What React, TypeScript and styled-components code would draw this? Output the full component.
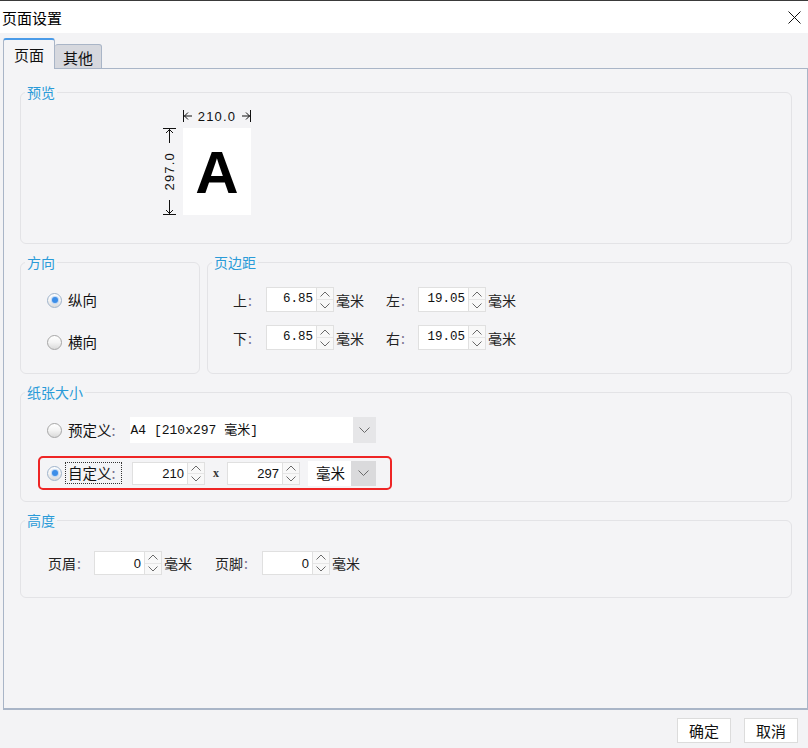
import * as React from "react";
import styled, { createGlobalStyle } from "styled-components";

const GlobalStyle = createGlobalStyle`
  html, body {
    margin: 0;
    padding: 0;
    background: #f3f3f5;
  }
  body {
    font-family: "Noto Sans CJK SC", "Liberation Sans", sans-serif;
    color: #1a1a1a;
  }
  * {
    box-sizing: border-box;
  }
`;

const Window = styled.div`
  width: 808px;
  height: 748px;
  display: flex;
  flex-direction: column;
  background: #f3f3f5;
  border-top: 1px solid #3a3a3a;
  overflow: hidden;
`;

const TitleBar = styled.div`
  height: 32px;
  flex: none;
  background: #fff;
  display: flex;
  align-items: center;
  justify-content: space-between;
  padding: 0 7px 0 2px;
  font-size: 15px;
  line-height: 1;
  color: #000;
`;

const CloseButton = styled.div`
  width: 14px;
  height: 14px;
  display: flex;
  align-items: center;
  justify-content: center;
`;

const Body = styled.div`
  flex: none;
  padding: 5px 0 0 3px;
`;

const TabRow = styled.div`
  display: flex;
  align-items: flex-end;
  height: 31px;
  margin-bottom: -1px;
  position: relative;
  z-index: 1;
`;

const Tab = styled.div<{ $active?: boolean }>`
  display: flex;
  align-items: center;
  justify-content: center;
  font-size: 15px;
  line-height: 1;
  color: #111;
  width: ${(p) => (p.$active ? "52px" : "47px")};
  height: ${(p) => (p.$active ? "31px" : "25px")};
  border: 1px solid #a9b5c7;
  border-top: ${(p) => (p.$active ? "2px solid #4a9be8" : "1px solid #a9b5c7")};
  border-bottom: ${(p) => (p.$active ? "none" : "1px solid #a9b5c7")};
  border-left: ${(p) => (p.$active ? "1px solid #a9b5c7" : "none")};
  border-radius: 3px 3px 0 0;
  background: ${(p) => (p.$active ? "#f4f4f6" : "#d6d8de")};
  padding-top: ${(p) => (p.$active ? "0" : "1px")};
`;

const Panel = styled.div`
  width: 805px;
  height: 642px;
  border: 1px solid #a9b5c7;
  border-bottom-width: 2px;
  background: #f4f4f6;
  padding: 15px 15px 0 16px;
  display: flex;
  flex-direction: column;
  gap: 10px;
`;

const Group = styled.fieldset<{ $h: number; $w?: number }>`
  margin: 0;
  padding: 0;
  min-width: 0;
  height: ${(p) => p.$h}px;
  width: ${(p) => (p.$w ? `${p.$w}px` : "auto")};
  border: 1px solid #e3e3e6;
  border-radius: 6px;
`;

const Legend = styled.legend`
  margin-left: 4px;
  padding: 0 2px;
  font-size: 14px;
  line-height: 16px;
  color: #2a9bd8;
`;

const GroupRow = styled.div`
  display: flex;
  gap: 7px;
`;

const GroupBody = styled.div<{ $pt: number; $pl: number; $gap?: number }>`
  display: flex;
  flex-direction: column;
  align-items: flex-start;
  padding: ${(p) => p.$pt}px 0 0 ${(p) => p.$pl}px;
  gap: ${(p) => p.$gap ?? 0}px;
`;

/* preview */

const Figure = styled.div`
  display: grid;
  grid-template-columns: 20px 68px;
  grid-template-rows: 20px 87px;
`;

const TopDim = styled.div`
  grid-column: 2;
  grid-row: 1;
  display: flex;
  align-items: center;
  justify-content: space-between;
  padding-bottom: 4px;
  font-family: "Liberation Sans", sans-serif;
  font-size: 13px;
  letter-spacing: 1.2px;
  line-height: 1;
  color: #111;
`;

const LeftDim = styled.div`
  grid-column: 1;
  grid-row: 2;
  width: 13px;
  display: flex;
  flex-direction: column;
  align-items: center;
  justify-content: space-between;
  font-family: "Liberation Sans", sans-serif;
  font-size: 13px;
  letter-spacing: 1.2px;
  line-height: 1;
  color: #111;
`;

const VerticalText = styled.span`
  writing-mode: vertical-rl;
  transform: rotate(180deg);
`;

const Paper = styled.div`
  grid-column: 2;
  grid-row: 2;
  background: #fff;
  display: flex;
  align-items: center;
  justify-content: center;
  font-family: "Liberation Sans", sans-serif;
  font-weight: 700;
  font-size: 60px;
  line-height: 1;
  color: #000;
  padding-top: 3px;
`;

/* radio */

const RadioRow = styled.div`
  display: flex;
  align-items: center;
  height: 20px;
`;

const RadioCircle = styled.span<{ $checked?: boolean }>`
  width: 15px;
  height: 15px;
  border-radius: 50%;
  border: 1px solid ${(p) => (p.$checked ? "#9fb4cc" : "#a6a6a6")};
  background: linear-gradient(180deg, #ffffff 0%, #f3f3f3 50%, #dadada 100%);
  display: flex;
  align-items: center;
  justify-content: center;
  flex: none;
  &::after {
    content: "";
    display: ${(p) => (p.$checked ? "block" : "none")};
    width: 6px;
    height: 6px;
    border-radius: 50%;
    background: #3d8ee8;
    box-shadow: 0 0 1px 1px #bcd6f5;
  }
`;

const RadioLabel = styled.span<{ $focus?: boolean }>`
  font-size: 14.5px;
  line-height: 1;
  color: #111;
  margin-left: ${(p) => (p.$focus ? "3px" : "6px")};
  width: ${(p) => (p.$focus ? "57px" : "auto")};
  padding: ${(p) => (p.$focus ? "3px 2px" : "0")};
  border: ${(p) => (p.$focus ? "1px dotted #333" : "none")};
`;

/* fields */

const FieldRow = styled.div<{ $gap: number }>`
  display: flex;
  align-items: center;
  gap: ${(p) => p.$gap}px;
`;

const Field = styled.div`
  display: flex;
  align-items: center;
`;

const Label = styled.span<{ $w: number }>`
  width: ${(p) => p.$w}px;
  font-size: 14px;
  line-height: 1;
  color: #222;
  & > i {
    font-style: normal;
    color: #7a6f8e;
    margin-left: 1px;
  }
`;

const InputBox = styled.div<{ $w: number; $h: number; $mono?: boolean }>`
  width: ${(p) => p.$w}px;
  height: ${(p) => p.$h}px;
  background: #fff;
  border: 1px solid #e0e0e0;
  display: flex;
  align-items: center;
  justify-content: flex-end;
  padding-right: 3px;
  font-family: ${(p) =>
    p.$mono ? '"Liberation Mono", monospace' : '"Liberation Sans", sans-serif'};
  font-size: ${(p) => (p.$mono ? "12.5px" : "13px")};
  line-height: 1;
  color: #111;
`;

const Spinner = styled.div<{ $h: number }>`
  width: 17px;
  height: ${(p) => p.$h}px;
  display: flex;
  flex-direction: column;
  border: 1px solid #e0e0e0;
  border-left: none;
  background: #f8f8f8;
`;

const SpinHalf = styled.div`
  flex: 1;
  display: flex;
  align-items: center;
  justify-content: center;
  & + & {
    border-top: 1px solid #e6e6e6;
  }
`;

const Unit = styled.span`
  margin-left: 2px;
  font-size: 14px;
  line-height: 1;
  color: #222;
`;

const Select = styled.div<{ $w: number; $h: number; $arrow: number; $shade: string }>`
  width: ${(p) => p.$w}px;
  height: ${(p) => p.$h}px;
  display: grid;
  grid-template-columns: 1fr ${(p) => p.$arrow}px;
  background: #fff;
  & > span:last-child {
    background: ${(p) => p.$shade};
    display: flex;
    align-items: center;
    justify-content: center;
  }
`;

const SelectText = styled.span<{ $mono?: boolean }>`
  display: flex;
  align-items: center;
  padding-left: ${(p) => (p.$mono ? "1px" : "8px")};
  font-family: ${(p) =>
    p.$mono
      ? '"Liberation Mono", "Noto Sans CJK SC", monospace'
      : '"Noto Sans CJK SC", sans-serif'};
  font-size: ${(p) => (p.$mono ? "13px" : "14.5px")};
  line-height: 1;
  color: #111;
  white-space: pre;
`;

const PaperRow = styled.div`
  display: flex;
  align-items: center;
  height: 26px;
  padding-left: 9px;
`;

const Highlight = styled.div`
  width: 354px;
  height: 34px;
  border: 2px solid #ee2525;
  border-radius: 5px;
  display: flex;
  align-items: center;
  padding-left: 7px;
`;

const Times = styled.span`
  width: 22px;
  text-align: center;
  font-family: "Liberation Serif", serif;
  font-weight: 700;
  font-size: 12px;
  color: #333;
`;

const Footer = styled.div`
  flex: 1;
  display: flex;
  justify-content: flex-end;
  gap: 13px;
  padding: 8px 10px 0 0;
`;

const Button = styled.div`
  width: 54px;
  height: 25px;
  background: #fff;
  border: 1px solid #dcdcdc;
  display: flex;
  align-items: center;
  justify-content: center;
  font-size: 15px;
  line-height: 1;
  color: #111;
`;

const Chevron = ({ up, size = 10, color = "#6a6a6a" }: { up?: boolean; size?: number; color?: string }) => (
  <svg width={size} height={size / 2 + 1} viewBox={`0 0 ${size} ${size / 2 + 1}`}>
    <polyline
      points={
        up
          ? `0.5,${size / 2 + 0.5} ${size / 2},1 ${size - 0.5},${size / 2 + 0.5}`
          : `0.5,0.5 ${size / 2},${size / 2} ${size - 0.5},0.5`
      }
      fill="none"
      stroke={color}
      strokeWidth="1"
    />
  </svg>
);

const SpinInput = ({
  value,
  w,
  h = 25,
  mono,
}: {
  value: string;
  w: number;
  h?: number;
  mono?: boolean;
}) => (
  <Field>
    <InputBox $w={w} $h={h} $mono={mono}>
      {value}
    </InputBox>
    <Spinner $h={h}>
      <SpinHalf>
        <Chevron up />
      </SpinHalf>
      <SpinHalf>
        <Chevron />
      </SpinHalf>
    </Spinner>
  </Field>
);

const MarginField = ({ label, value, lw }: { label: string; value: string; lw: number }) => (
  <Field>
    <Label $w={lw}>
      {label}
      <i>:</i>
    </Label>
    <SpinInput value={value} w={51} mono />
    <Unit>毫米</Unit>
  </Field>
);

const HeightField = ({ label, lw }: { label: string; lw: number }) => (
  <Field>
    <Label $w={lw}>
      {label}
      <i>:</i>
    </Label>
    <SpinInput value="0" w={51} h={24} />
    <Unit>毫米</Unit>
  </Field>
);

const DimArrowH = ({ right }: { right?: boolean }) => (
  <svg width="14" height="12" viewBox="0 0 14 12" style={{ transform: right ? "scaleX(-1)" : undefined }}>
    <line x1="0.5" y1="0" x2="0.5" y2="12" stroke="#111" />
    <line x1="1" y1="6" x2="9" y2="6" stroke="#111" />
    <polyline points="5,2.5 1.5,6 5,9.5" fill="none" stroke="#111" />
  </svg>
);

const DimArrowV = ({ down }: { down?: boolean }) => (
  <svg width="13" height="16" viewBox="0 0 13 16" style={{ transform: down ? "scaleY(-1)" : undefined }}>
    <line x1="0" y1="0.5" x2="13" y2="0.5" stroke="#111" />
    <line x1="6.5" y1="1" x2="6.5" y2="15" stroke="#111" />
    <polyline points="3,5 6.5,1.5 10,5" fill="none" stroke="#111" />
  </svg>
);

export default function App() {
  return (
    <>
      <GlobalStyle />
      <Window>
        <TitleBar>
          <span>页面设置</span>
          <CloseButton>
            <svg width="13" height="13" viewBox="0 0 13 13">
              <line x1="0.5" y1="0.5" x2="12.5" y2="12.5" stroke="#111" />
              <line x1="12.5" y1="0.5" x2="0.5" y2="12.5" stroke="#111" />
            </svg>
          </CloseButton>
        </TitleBar>
        <Body>
          <TabRow>
            <Tab $active>页面</Tab>
            <Tab>其他</Tab>
          </TabRow>
          <Panel>
            <Group $h={160}>
              <Legend>预览</Legend>
              <GroupBody $pt={8} $pl={142}>
                <Figure>
                  <TopDim>
                    <DimArrowH />
                    <span>210.0</span>
                    <DimArrowH right />
                  </TopDim>
                  <LeftDim>
                    <DimArrowV />
                    <VerticalText>297.0</VerticalText>
                    <DimArrowV down />
                  </LeftDim>
                  <Paper>A</Paper>
                </Figure>
              </GroupBody>
            </Group>

            <GroupRow>
              <Group $h={120} $w={180}>
                <Legend>方向</Legend>
                <GroupBody $pt={20} $pl={26} $gap={22}>
                  <RadioRow>
                    <RadioCircle $checked />
                    <RadioLabel>纵向</RadioLabel>
                  </RadioRow>
                  <RadioRow>
                    <RadioCircle />
                    <RadioLabel>横向</RadioLabel>
                  </RadioRow>
                </GroupBody>
              </Group>
              <Group $h={120} $w={585}>
                <Legend>页边距</Legend>
                <GroupBody $pt={17} $pl={25} $gap={13}>
                  <FieldRow $gap={22}>
                    <MarginField label="上" value="6.85" lw={33} />
                    <MarginField label="左" value="19.05" lw={32} />
                  </FieldRow>
                  <FieldRow $gap={22}>
                    <MarginField label="下" value="6.85" lw={33} />
                    <MarginField label="右" value="19.05" lw={32} />
                  </FieldRow>
                </GroupBody>
              </Group>
            </GroupRow>

            <Group $h={118}>
              <Legend>纸张大小</Legend>
              <GroupBody $pt={17} $pl={17} $gap={13}>
                <PaperRow>
                  <RadioCircle />
                  <RadioLabel>
                    预定义<span style={{ color: "#7a6f8e" }}>:</span>
                  </RadioLabel>
                  <div style={{ width: 14 }} />
                  <Select $w={246} $h={26} $arrow={23} $shade="#e6e6e8">
                    <SelectText $mono>A4 [210x297 毫米]</SelectText>
                    <span>
                      <Chevron size={11} />
                    </span>
                  </Select>
                </PaperRow>
                <Highlight>
                  <RadioCircle $checked />
                  <RadioLabel $focus>
                    自定义<span style={{ color: "#7a6f8e" }}>:</span>
                  </RadioLabel>
                  <div style={{ width: 10 }} />
                  <SpinInput value="210" w={56} h={23} />
                  <Times>x</Times>
                  <SpinInput value="297" w={56} h={23} />
                  <div style={{ width: 8 }} />
                  <Select $w={68} $h={25} $arrow={25} $shade="#dadadc">
                    <SelectText>毫米</SelectText>
                    <span>
                      <Chevron size={11} />
                    </span>
                  </Select>
                </Highlight>
              </GroupBody>
            </Group>

            <Group $h={86}>
              <Legend>高度</Legend>
              <GroupBody $pt={23} $pl={27}>
                <FieldRow $gap={23}>
                  <HeightField label="页眉" lw={46} />
                  <HeightField label="页脚" lw={47} />
                </FieldRow>
              </GroupBody>
            </Group>
          </Panel>
        </Body>
        <Footer>
          <Button>确定</Button>
          <Button>取消</Button>
        </Footer>
      </Window>
    </>
  );
}
